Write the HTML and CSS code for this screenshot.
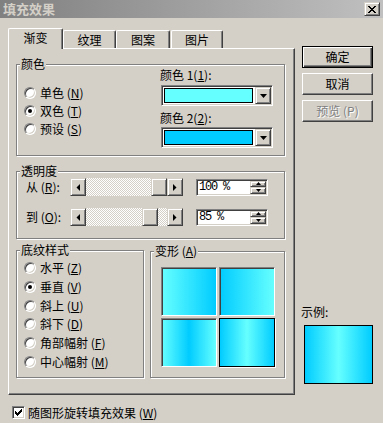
FILE: index.html
```html
<!DOCTYPE html>
<html>
<head>
<meta charset="utf-8">
<link rel="stylesheet" href="styles.css">
</head>
<body>
<div class="dialog">
  <div class="titlebar">
    <span class="title">填充效果</span>
    <span class="close btn3d"><svg width="8" height="7" viewBox="0 0 8 7" shape-rendering="crispEdges"><path d="M0 0h2v1H0zM6 0h2v1H6zM1 1h2v1H1zM5 1h2v1H5zM2 2h4v1H2zM3 3h2v1H3zM2 4h4v1H2zM1 5h2v1H1zM5 5h2v1H5zM0 6h2v1H0zM6 6h2v1H6z" fill="#000"/></svg></span>
  </div>
  <div class="content">
    <div class="left">
      <div class="tabs">
        <div class="tab active">渐变</div>
        <div class="tab t2">纹理</div>
        <div class="tab t3">图案</div>
        <div class="tab t4">图片</div>
      </div>
      <div class="panel">
        <div class="group g-color">
          <span class="gtitle">颜色</span>
          <div class="radios">
            <div class="radio"><span class="rb"></span>单色 (<u>N</u>)</div>
            <div class="radio"><span class="rb on"></span>双色 (<u>T</u>)</div>
            <div class="radio"><span class="rb"></span>预设 (<u>S</u>)</div>
          </div>
          <div class="colors">
            <div class="clabel">颜色 1(<u>1</u>):</div>
            <div class="combo c1"><span class="swatch s1"></span><span class="dd btn3d"><svg width="7" height="4" viewBox="0 0 7 4"><path d="M0 0h7L3.5 4z" fill="#000"/></svg></span></div>
            <div class="clabel l2">颜色 2(<u>2</u>):</div>
            <div class="combo c2"><span class="swatch s2"></span><span class="dd btn3d"><svg width="7" height="4" viewBox="0 0 7 4"><path d="M0 0h7L3.5 4z" fill="#000"/></svg></span></div>
          </div>
        </div>

        <div class="group g-trans">
          <span class="gtitle">透明度</span>
          <div class="trow">
            <span class="tlabel">从 (<u>R</u>):</span>
            <div class="scroll">
              <span class="sbtn btn3d"><svg width="4" height="7" viewBox="0 0 4 7"><path d="M4 0v7L0.5 3.5z" fill="#000"/></svg></span>
              <div class="track"><span class="thumb btn3d" style="margin-left:65px"></span></div>
              <span class="sbtn btn3d"><svg width="4" height="7" viewBox="0 0 4 7"><path d="M0 0v7L3.5 3.5z" fill="#000"/></svg></span>
            </div>
            <div class="spin">
              <span class="val">100 %</span>
              <div class="spbtns">
                <span class="spb btn3d"><svg width="5" height="3" viewBox="0 0 5 3"><path d="M0 3h5L2.5 0z" fill="#000"/></svg></span>
                <span class="spb btn3d"><svg width="5" height="3" viewBox="0 0 5 3"><path d="M0 0h5L2.5 3z" fill="#000"/></svg></span>
              </div>
            </div>
          </div>
          <div class="trow r2">
            <span class="tlabel">到 (<u>O</u>):</span>
            <div class="scroll">
              <span class="sbtn btn3d"><svg width="4" height="7" viewBox="0 0 4 7"><path d="M4 0v7L0.5 3.5z" fill="#000"/></svg></span>
              <div class="track"><span class="thumb btn3d" style="margin-left:56px"></span></div>
              <span class="sbtn btn3d"><svg width="4" height="7" viewBox="0 0 4 7"><path d="M0 0v7L3.5 3.5z" fill="#000"/></svg></span>
            </div>
            <div class="spin">
              <span class="val">85 %</span>
              <div class="spbtns">
                <span class="spb btn3d"><svg width="5" height="3" viewBox="0 0 5 3"><path d="M0 3h5L2.5 0z" fill="#000"/></svg></span>
                <span class="spb btn3d"><svg width="5" height="3" viewBox="0 0 5 3"><path d="M0 0h5L2.5 3z" fill="#000"/></svg></span>
              </div>
            </div>
          </div>
        </div>

        <div class="bottom">
          <div class="group g-pattern">
            <span class="gtitle">底纹样式</span>
            <div class="radio r-tall"><span class="rb"></span>水平 (<u>Z</u>)</div>
            <div class="radio r-tall"><span class="rb on"></span>垂直 (<u>V</u>)</div>
            <div class="radio r-tall"><span class="rb"></span>斜上 (<u>U</u>)</div>
            <div class="radio r-tall"><span class="rb"></span>斜下 (<u>D</u>)</div>
            <div class="radio r-tall"><span class="rb"></span>角部幅射 (<u>F</u>)</div>
            <div class="radio r-tall"><span class="rb"></span>中心幅射 (<u>M</u>)</div>
          </div>
          <div class="group g-shape">
            <span class="gtitle">变形 (<u>A</u>)</span>
            <div class="tiles">
              <span class="tile v1"></span>
              <span class="tile v2"></span>
              <span class="tile v3"></span>
              <span class="tile v4 sel"></span>
            </div>
          </div>
        </div>
      </div>
    </div>
    <div class="right">
      <div class="button default">确定</div>
      <div class="button">取消</div>
      <div class="button disabled">预览 (P)</div>
      <div class="sample-label">示例:</div>
      <div class="sample"></div>
    </div>
  </div>
  <div class="footer">
    <span class="check"><svg width="7" height="7" viewBox="0 0 7 7" shape-rendering="crispEdges"><path d="M6 0h1v3H6zM5 1h1v3H5zM4 2h1v3H4zM3 3h1v3H3zM2 4h1v3H2zM1 3h1v3H1zM0 2h1v3H0z" fill="#000"/></svg></span>
    <span class="ftext">随图形旋转填充效果 (<u>W</u>)</span>
  </div>
</div>
</body>
</html>
```

FILE: styles.css
```css
* { box-sizing: border-box; }

body {
  margin: 0;
  background: #d4d0c8;
  font-family: "Noto Sans CJK SC", "Liberation Sans", sans-serif;
  font-size: 12px;
  color: #000;
}

u { text-decoration: underline; text-underline-offset: 1px; }

.dialog {
  width: 383px;
  height: 423px;
  overflow: hidden;
  background: #d4d0c8;
}

.titlebar {
  height: 18px;
  background: linear-gradient(to right, #808080, #c0c0c0);
  display: flex;
  align-items: center;
  justify-content: space-between;
  padding: 0 3px 0 3px;
}

.title {
  font-weight: bold;
  color: #d4d0c8;
  line-height: 18px;
  font-size: 13px;
}

.btn3d {
  background: #d4d0c8;
  border: 1px solid;
  border-color: #d4d0c8 #404040 #404040 #d4d0c8;
  box-shadow: inset 1px 1px 0 #fff, inset -1px -1px 0 #808080;
  display: flex;
  align-items: center;
  justify-content: center;
}

.close {
  width: 16px;
  height: 14px;
}

.content {
  display: flex;
  padding: 10px 0 0 8px;
}

.left { width: 287px; }

.tabs {
  display: flex;
  height: 20px;
  align-items: flex-end;
}

.tab {
  height: 18px;
  border-top: 1px solid #fff;
  border-left: 1px solid #fff;
  border-right: 1px solid #404040;
  box-shadow: inset -1px 0 0 #808080;
  border-radius: 2px 2px 0 0;
  display: flex;
  align-items: center;
  justify-content: center;
  line-height: 14px;
  background: #d4d0c8;
}

.tab.active {
  width: 55px;
  height: 21px;
  margin-bottom: -1px;
  position: relative;
  z-index: 1;
  padding-bottom: 2px;
}
.tab.t2 { width: 53px; }
.tab.t3 { width: 54px; }
.tab.t4 { width: 52px; margin-left: 1px; }

.panel {
  height: 347px;
  border: 1px solid;
  border-color: #fff #404040 #404040 #fff;
  box-shadow: inset -1px -1px 0 #808080;
  padding: 15px 0 0 7px;
}

.group {
  position: relative;
  border: 1px solid #808080;
  box-shadow: inset 1px 1px 0 #fff, 1px 1px 0 #fff;
}

.gtitle {
  position: absolute;
  top: -8px;
  left: 3px;
  padding: 0 1px;
  background: #d4d0c8;
  line-height: 14px;
}

.g-color {
  width: 269px;
  height: 92px;
  display: flex;
}

.radios {
  margin: 19px 0 0 7px;
  display: flex;
  flex-direction: column;
}

.radio {
  height: 18px;
  display: flex;
  align-items: center;
  line-height: 14px;
  white-space: pre;
}

.rb {
  width: 12px;
  height: 12px;
  border-radius: 50%;
  border: 1px solid;
  border-color: #808080 #fff #fff #808080;
  box-shadow: inset 1px 1px 0 #404040, inset -1px -1px 0 #d4d0c8;
  background: #fff;
  margin-right: 4px;
  display: flex;
  align-items: center;
  justify-content: center;
  flex: none;
}

.rb.on::after {
  content: "";
  width: 4px;
  height: 4px;
  border-radius: 50%;
  background: #000;
}

.colors {
  margin: 3px 11px 0 auto;
  width: 113px;
}

.clabel {
  height: 14px;
  line-height: 14px;
}
.clabel.l2 { margin-top: 5px; }

.combo {
  display: flex;
  width: 112px;
  height: 21px;
  margin-left: 1px;
  margin-top: 3px;
  border: 1px solid;
  border-color: #808080 #fff #fff #808080;
  box-shadow: inset 1px 1px 0 #404040, inset -1px -1px 0 #d4d0c8;
  background: #fff;
  padding: 1px;
}
.combo.c2 { margin-top: 2px; }

.swatch {
  flex: 1;
  margin: 1px 2px 1px 1px;
  border: 1px solid #000;
}
.s1 { background: #66ffff; }
.s2 { background: #00ccff; }

.dd {
  width: 16px;
  height: 17px;
  flex: none;
}

.g-trans {
  width: 269px;
  height: 68px;
  margin-top: 15px;
  padding-top: 6px;
}

.trow {
  display: flex;
  align-items: center;
  height: 18px;
}
.trow.r2 { margin-top: 12px; }

.tlabel {
  width: 44px;
  margin-left: 9px;
  line-height: 14px;
  white-space: pre;
}

.scroll {
  display: flex;
  width: 113px;
  height: 18px;
}

.sbtn {
  width: 16px;
  height: 18px;
  flex: none;
}

.track {
  flex: 1;
  display: flex;
  background: repeating-conic-gradient(#fff 0 25%, #d4d0c8 0 50%) 0 0 / 2px 2px;
}

.thumb {
  width: 16px;
  height: 18px;
}

.spin {
  display: flex;
  width: 72px;
  height: 17px;
  margin-left: 13px;
  border: 1px solid;
  border-color: #808080 #fff #fff #808080;
  box-shadow: inset 1px 1px 0 #404040, inset -1px -1px 0 #d4d0c8;
  background: #fff;
  padding: 1px;
}

.val {
  flex: 1;
  font-family: "Liberation Mono", monospace;
  font-size: 12px;
  letter-spacing: -1.2px;
  line-height: 13px;
  padding-left: 1px;
  white-space: pre;
}

.spbtns {
  width: 16px;
  display: flex;
  flex-direction: column;
}

.spb {
  height: 6.5px;
  flex: 1;
}

.bottom {
  display: flex;
  margin-top: 11px;
}

.g-pattern {
  width: 128px;
  height: 128px;
  padding: 8px 0 0 7px;
}

.radio.r-tall { height: 18.7px; }

.g-shape {
  width: 135px;
  height: 127px;
  margin: 1px 0 0 6px;
  padding: 15px 0 0 10px;
}

.tiles {
  display: grid;
  grid-template-columns: 56px 56px;
  grid-auto-rows: 49px;
  gap: 2px;
}

.tile {
  border: 1px solid;
  border-color: #808080 #fff #fff #808080;
  box-shadow: inset 1px 1px 0 #404040;
}
.tile.sel {
  border: 1px solid #000;
  box-shadow: 1px 1px 0 #fff;
}
.v1 { background: linear-gradient(to right, #66ffff, #00ccff); }
.v2 { background: linear-gradient(to right, #00ccff, #66ffff); }
.v3 { background: linear-gradient(to right, #66ffff, #00ccff 50%, #66ffff); }
.v4 { background: linear-gradient(to right, #00ccff, #66ffff 50%, #00ccff); }

.right {
  display: flex;
  flex-direction: column;
  width: 72px;
  margin: 18px 0 0 7px;
}

.button {
  width: 71px;
  height: 22px;
  border: 1px solid;
  border-color: #fff #404040 #404040 #fff;
  box-shadow: inset -1px -1px 0 #808080;
  display: flex;
  align-items: center;
  justify-content: center;
  line-height: 14px;
  margin-bottom: 5px;
  white-space: pre;
}

.button.default {
  border: 1px solid #000;
  box-shadow: inset 1px 1px 0 #fff, inset -1px -1px 0 #404040, inset -2px -2px 0 #808080;
}

.button.disabled {
  color: #808080;
  text-shadow: 1px 1px 0 #fff;
}

.sample-label {
  margin-top: 178px;
  line-height: 14px;
  height: 14px;
  margin-left: -1px;
}

.sample {
  width: 69px;
  height: 59px;
  margin: 6px 0 0 2px;
  border: 1px solid #000;
  background: linear-gradient(to right, #00ccff, #66ffff 50%, #00ccff);
}

.footer {
  display: flex;
  align-items: center;
  height: 13px;
  margin: 11px 0 0 12px;
}

.check {
  width: 13px;
  height: 13px;
  border: 1px solid;
  border-color: #808080 #fff #fff #808080;
  box-shadow: inset 1px 1px 0 #404040, inset -1px -1px 0 #d4d0c8;
  background: #fff;
  display: flex;
  align-items: center;
  justify-content: center;
}

.ftext {
  margin-left: 3px;
  line-height: 14px;
  white-space: pre;
}
```
